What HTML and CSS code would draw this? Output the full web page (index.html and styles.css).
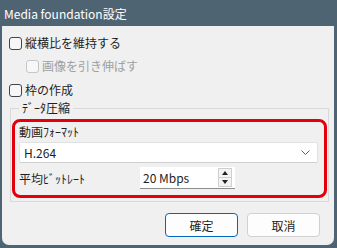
FILE: index.html
```html
<!DOCTYPE html>
<html lang="ja">
<head>
    <meta charset="UTF-8">
    <title>Media foundation設定</title>
    <link rel="stylesheet" href="styles.css">
</head>
<body>
    <div class="titlebar">Media foundation設定</div>

    <div class="dialog">
        <label class="check-row row-first">
            <span class="box"></span>縦横比を維持する
        </label>
        <label class="check-row row-indent disabled">
            <span class="box"></span>画像を引き伸ばす
        </label>
        <label class="check-row row-third">
            <span class="box"></span>枠の作成
        </label>

        <fieldset class="group">
            <legend>ﾃﾞｰﾀ圧縮</legend>
            <div class="highlight">
                <div class="field-label">動画ﾌｫｰﾏｯﾄ</div>
                <div class="select">
                    <span>H.264</span>
                    <svg width="9" height="6" viewBox="0 0 9 6"><polyline points="0.5,0.5 4.5,4.5 8.5,0.5" fill="none" stroke="#5f5f5f" stroke-width="1"/></svg>
                </div>
                <div class="bitrate-row">
                    <span class="bitrate-label">平均ﾋﾞｯﾄﾚｰﾄ</span>
                    <div class="spin">
                        <span class="spin-text">20 Mbps</span>
                        <div class="spin-btns">
                            <span class="spin-btn"><span class="tri-up"></span></span>
                            <span class="spin-btn"><span class="tri-down"></span></span>
                        </div>
                    </div>
                </div>
            </div>
        </fieldset>

        <div class="buttons">
            <button class="btn btn-primary">確定</button>
            <button class="btn">取消</button>
        </div>
    </div>
</body>
</html>
```

FILE: styles.css
```css
body {
    margin: 0;
    background-color: #4f6473;
    font-family: "Noto Sans CJK JP", "Noto Sans", sans-serif;
    font-size: 12px;
    color: #1f1f1f;
    width: 337px;
    height: 248px;
    overflow: hidden;
}

.titlebar {
    height: 26px;
    line-height: 27px;
    padding-left: 4px;
    color: #ffffff;
}

.dialog {
    margin: 0 3px 0 2px;
    height: 219px;
    background-color: #f0f0f0;
    border-radius: 0 0 7px 7px;
    overflow: hidden;
}

.check-row {
    display: flex;
    align-items: center;
    height: 16px;
    line-height: 16px;
    padding-left: 7px;
}

.row-first {
    padding-top: 9px;
}

.row-indent {
    margin-top: 7px;
    padding-left: 24px;
}

.row-third {
    margin-top: 8px;
}

.box {
    width: 11px;
    height: 11px;
    border: 1px solid #444;
    border-radius: 3px;
    background-color: #f6f6f6;
    margin-right: 3px;
}

.disabled {
    color: #a0a0a0;
}

.disabled .box {
    border-color: #c6c6c6;
    background-color: #f7f7f7;
}

.group {
    margin: 3px 0 0 8px;
    padding: 4px 0 3px 0;
    border: 1px solid #d9d9d9;
    box-sizing: border-box;
    width: 319px;
}

.group legend {
    margin-left: 8px;
    padding: 0 3px;
    line-height: 14px;
}

.highlight {
    margin: 0 1px;
    border: 3px solid #e3000b;
    border-radius: 8px;
    padding: 2px 0 6px 4px;
}

.field-label {
    height: 16px;
    line-height: 16px;
}

.select {
    margin: 2px 6px 0 0;
    height: 19px;
    background-color: #ffffff;
    border: 1px solid #e1e1e1;
    border-bottom-color: #cfcfcf;
    border-radius: 2px;
    display: flex;
    align-items: center;
    justify-content: space-between;
    padding: 0 7px 0 4px;
}

.select svg {
    margin-top: 1px;
}

.bitrate-row {
    margin-top: 4px;
    height: 22px;
    display: flex;
    align-items: center;
}

.bitrate-label {
    width: 121px;
}

.spin {
    width: 95px;
    height: 21px;
    background-color: #ffffff;
    border-bottom: 1px solid #8d8d8d;
    display: flex;
    align-items: center;
}

.spin-text {
    flex: 1;
    padding-left: 3px;
}

.spin-btns {
    display: flex;
    flex-direction: column;
    margin-right: 3px;
}

.spin-btn {
    width: 12px;
    height: 8px;
    border: 1px solid #cfcfcf;
    background-color: #f3f3f3;
    display: flex;
    align-items: center;
    justify-content: center;
}

.spin-btn + .spin-btn {
    border-top: none;
}

.tri-up {
    border-left: 3px solid transparent;
    border-right: 3px solid transparent;
    border-bottom: 4px solid #222;
}

.tri-down {
    border-left: 3px solid transparent;
    border-right: 3px solid transparent;
    border-top: 4px solid #222;
}

.buttons {
    display: flex;
    justify-content: flex-end;
    gap: 9px;
    margin-top: 11px;
    padding-right: 14px;
}

.btn {
    width: 73px;
    height: 24px;
    font-family: inherit;
    font-size: 12px;
    color: #1f1f1f;
    background-color: #fdfdfd;
    border: 1px solid #d0d0d0;
    border-radius: 4px;
    padding: 0;
}

.btn-primary {
    border-color: #0067c0;
}
```
